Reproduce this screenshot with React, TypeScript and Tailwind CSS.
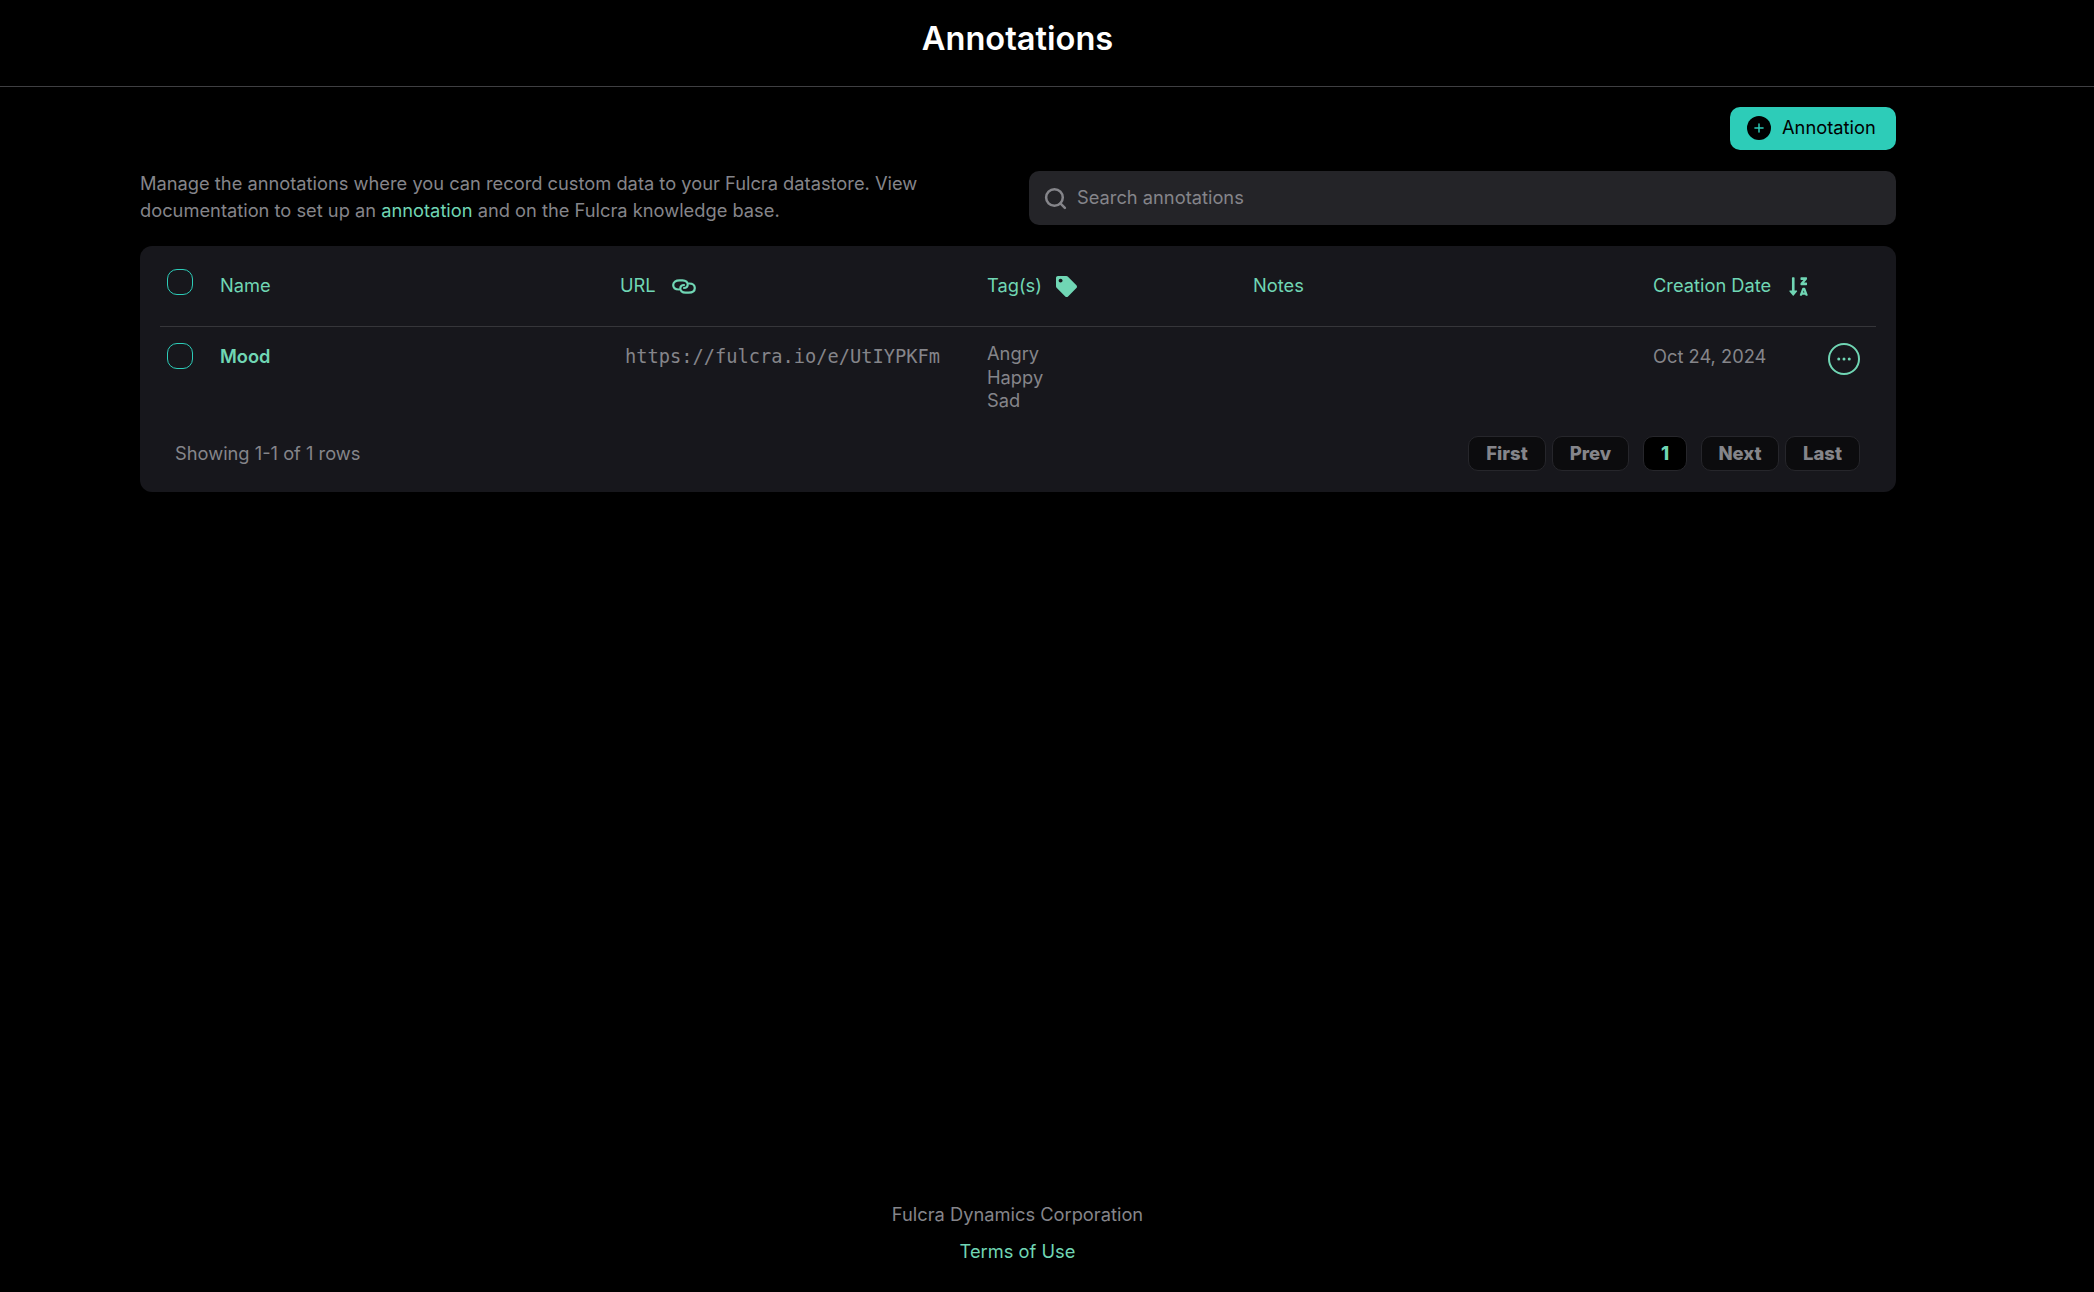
import { Search, Plus, Ellipsis } from "lucide-react";
import { FaTag, FaSortAlphaDownAlt } from "react-icons/fa";

const mint = "text-[#70d6b4]";

function LinkIcon() {
  return (
    <svg width="24" height="15" viewBox="0 0 24 15" fill="none" stroke="#70d6b4" strokeWidth="2.2" strokeLinecap="round">
      <path d="M7 10.5C3.5 10.5 1.2 8.8 1.2 6C1.2 3 3.8 1.3 7.5 1.3H10.5C13.8 1.3 16 3.2 15.7 6C15.5 7.8 14 9 12 9" />
      <path d="M17 4.5C20.5 4.5 22.8 6.2 22.8 9C22.8 12 20.2 13.7 16.5 13.7H13.5C10.2 13.7 8 11.8 8.3 9C8.5 7.2 10 6 12 6" />
    </svg>
  );
}

function Circle() {
  return <div className="h-[26px] w-[26px] rounded-[10px] border border-[#2dccb8]" />;
}

function PageButton({ label, width, active }: { label: string; width: string; active?: boolean }) {
  return (
    <button
      className={`h-[35px] rounded-[10px] border border-[#26262b] text-[18.5px] leading-none font-extrabold ${width} ${
        active ? "bg-black text-[#70d6b4]" : "bg-[#0c0c0e] text-[#85858a]"
      }`}
    >
      {label}
    </button>
  );
}

export default function App() {
  return (
    <div className="flex min-h-screen flex-col bg-black font-['Inter',sans-serif] text-[18.3px] text-[#85858a]">
      {/* Header */}
      <header className="flex h-[87px] items-center justify-center border-b border-[#3f3f42] pr-[59px] pb-[10px]">
        <h1 className="text-[32.6px] font-semibold text-white">Annotations</h1>
      </header>

      <main className="mx-[140px] w-[1756px]">
        <div className="mt-[20px] flex justify-end">
          <button className="flex h-[43px] w-[166px] items-center gap-[11px] rounded-[10px] bg-[#2dccb8] pb-[1px] pl-[17px] text-black">
            <span className="flex h-6 w-6 items-center justify-center rounded-full bg-black">
              <Plus size={14} strokeWidth={2.5} color="#2dccb8" />
            </span>
            Annotation
          </button>
        </div>

        {/* Intro and search */}
        <div className="mt-[21px] flex items-center justify-between">
          <p className="-mt-[2px] w-[800px] leading-[27px]">
            Manage the annotations where you can record custom data to your Fulcra datastore. View documentation to set
            up an <a className={mint}>annotation</a> and on the Fulcra knowledge base.
          </p>
          <div className="flex h-[54px] w-[867px] items-center gap-[9px] rounded-[10px] bg-[#242428] pl-[14px]">
            <Search size={25} strokeWidth={2.4} />
            Search annotations
          </div>
        </div>

        {/* Table */}
        <div className="mt-[21px] h-[246px] rounded-[12px] bg-[#17171c] px-[20px]">
          <div className={`grid h-[81px] grid-cols-[60px_400px_367px_266px_400px_1fr] items-center border-b border-[#36363a] ${mint}`}>
            <div className="-mt-[8px] pl-[7px]"><Circle /></div>
            <span>Name</span>
            <span className="flex items-center gap-[16px]">URL <LinkIcon /></span>
            <span className="flex items-center gap-[14px]">Tag(s) <FaTag size={21} /></span>
            <span>Notes</span>
            <span className="flex items-center gap-[17px]">Creation Date <FaSortAlphaDownAlt size={21} /></span>
          </div>
          <div className="grid h-[81px] grid-cols-[60px_400px_367px_266px_400px_1fr] pt-[15px]">
            <div className="pt-[1px] pl-[7px]"><Circle /></div>
            <span className={`pt-[1px] font-semibold ${mint}`}>Mood</span>
            <span className="pt-[1px] pl-[5px] font-['DejaVu_Sans_Mono',monospace] text-[18.7px]">https://fulcra.io/e/UtIYPKFm</span>
            <div className="leading-[23.5px]">
              <div>Angry</div>
              <div>Happy</div>
              <div>Sad</div>
            </div>
            <span />
            <div className="flex justify-between pr-[16px]">
              <span className="pt-[1px]">Oct 24, 2024</span>
              <span className="mt-[1px] flex h-8 w-8 items-center justify-center rounded-full border-2 border-[#70d6b4]">
                <Ellipsis size={18} color="#70d6b4" />
              </span>
            </div>
          </div>
          <div className="mt-[28px] flex items-center justify-between pr-[16px] pl-[15px]">
            <span>Showing 1-1 of 1 rows</span>
            <div className="flex items-center">
              <div className="flex gap-[6px]">
                <PageButton label="First" width="w-[78px]" />
                <PageButton label="Prev" width="w-[77px]" />
              </div>
              <div className="mx-[14px]"><PageButton label="1" width="w-[44px]" active /></div>
              <div className="flex gap-[6px]">
                <PageButton label="Next" width="w-[78px]" />
                <PageButton label="Last" width="w-[75px]" />
              </div>
            </div>
          </div>
        </div>
      </main>

      {/* Footer */}
      <footer className="mt-auto flex flex-col items-center gap-[9px] pr-[59px] pb-[27px]">
        <span>Fulcra Dynamics Corporation</span>
        <a className={mint}>Terms of Use</a>
      </footer>
    </div>
  );
}
